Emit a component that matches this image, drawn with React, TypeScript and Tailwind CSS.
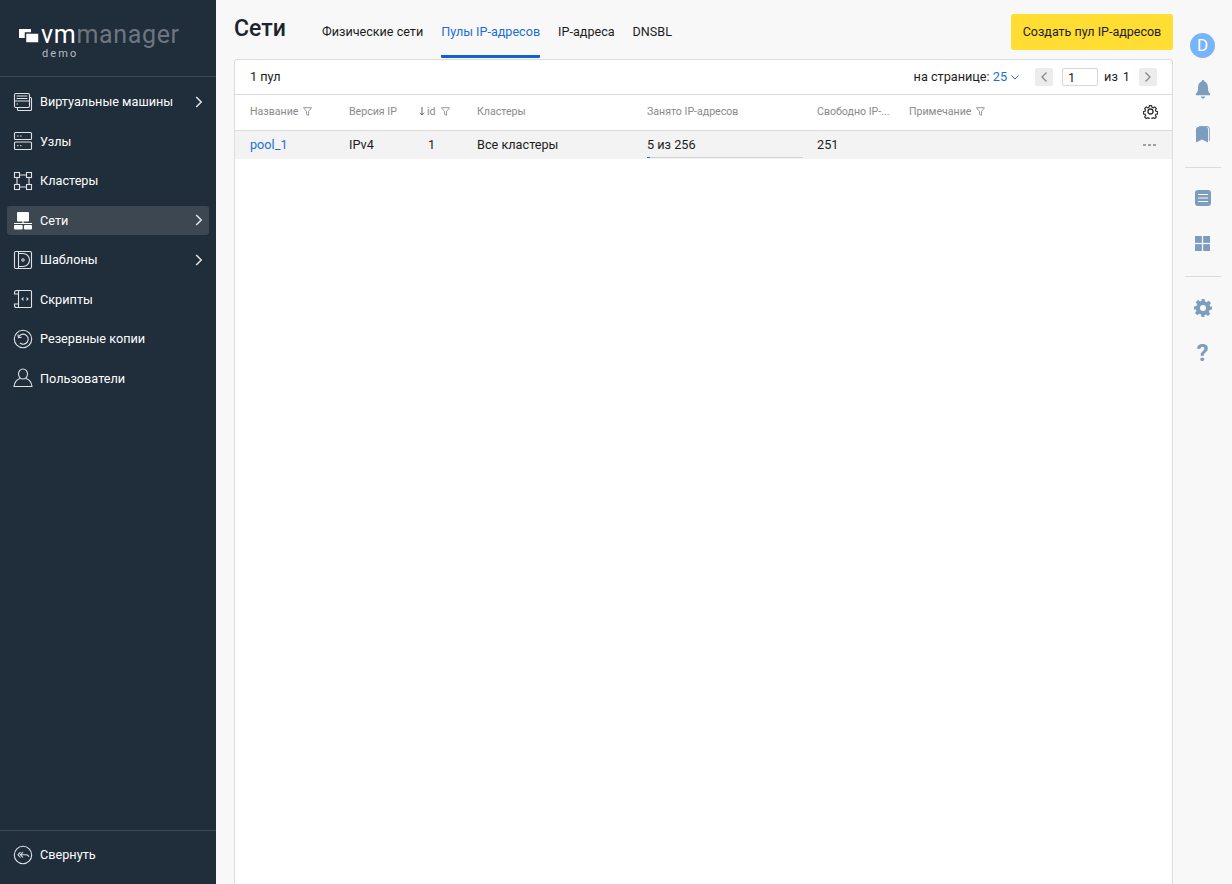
function Chevron({ className = "" }: { className?: string }) {
  return (
    <svg width="8" height="12" viewBox="0 0 8 12" fill="none" stroke="currentColor" strokeWidth="1.500" className={className}>
      <path d="M1.200 1l5 5-5 5" />
    </svg>
  );
}

const S = "#dfe2e5";
function IconVM() {
  return (
    <svg width="20" height="20" viewBox="0 0 20 20" fill="none" stroke={S} strokeWidth="1.100">
      <rect x="1.500" y="1.500" width="15" height="14" rx="1.500" />
      <path d="M3.500 4h11M3.500 6.500h11M1.500 9h15" />
      <path d="M3.500 12h1.500" />
      <path d="M16.500 5.500h1a1 1 0 0 1 1 1v11a1 1 0 0 1-1 1h-12a1 1 0 0 1-1-1v-2" />
    </svg>
  );
}
function IconNode() {
  return (
    <svg width="20" height="20" viewBox="0 0 20 20" fill="none" stroke={S} strokeWidth="1.100">
      <rect x="1.500" y="1.500" width="17" height="7" rx="1" />
      <rect x="1.500" y="11" width="17" height="7.500" rx="1" />
      <path d="M4 5h1.500M7 5h1.500M4 14.800h1.500M7 14.800h1.500" />
    </svg>
  );
}
function IconCluster() {
  return (
    <svg width="20" height="20" viewBox="0 0 20 20" fill="none" stroke={S} strokeWidth="1.100">
      <rect x="1.500" y="1.500" width="5" height="5" />
      <rect x="13.500" y="1.500" width="5" height="5" />
      <rect x="1.500" y="13.500" width="5" height="5" />
      <rect x="13.500" y="13.500" width="5" height="5" />
      <path d="M7 4h6M7 16h6M4 7v6M16 7v6" />
    </svg>
  );
}
function IconNet() {
  return (
    <svg width="20" height="20" viewBox="0 0 20 20" fill="#ffffff">
      <rect x="4" y="2" width="12" height="9.500" rx="1" />
      <rect x="9.400" y="11" width="1.200" height="3" />
      <rect x="1" y="13" width="18" height="1" />
      <rect x="1" y="15" width="8.700" height="4.500" rx="1" />
      <rect x="11" y="15" width="8" height="4.500" rx="1" />
    </svg>
  );
}
function IconTemplate() {
  return (
    <svg width="20" height="20" viewBox="0 0 20 20" fill="none" stroke={S} strokeWidth="1.100">
      <rect x="1.500" y="1.500" width="17" height="17" rx="1.500" />
      <path d="M5.500 1.500v17" />
      <path d="M5.500 3.500H10a6.500 6.500 0 0 1 0 13H5.500" />
      <circle cx="10" cy="10" r="1.200" />
    </svg>
  );
}
function IconScript() {
  return (
    <svg width="20" height="20" viewBox="0 0 20 20" fill="none" stroke={S} strokeWidth="1.100">
      <path d="M5.500 1.500h12a1 1 0 0 1 1 1v15a1 1 0 0 1-1 1h-12" />
      <path d="M5.500 1.500h-2a2 2 0 0 0-2 2v1.500h4zM5.500 18.500h-2a2 2 0 0 1-2-2V15h4zM5.500 5v10" />
      <path d="M10.500 8.700 9 10l1.500 1.300M13.500 8.700 15 10l-1.500 1.300" />
    </svg>
  );
}
function IconBackup() {
  return (
    <svg width="20" height="20" viewBox="0 0 20 20" fill="none" stroke={S} strokeWidth="1.100">
      <circle cx="10" cy="10" r="8.700" />
      <path d="M5.500 8.500A5 5 0 1 1 7 14" />
      <path d="M5 5.500l.5 3.200 3.200-.5" />
    </svg>
  );
}
function IconUser() {
  return (
    <svg width="20" height="20" viewBox="0 0 20 20" fill="none" stroke={S} strokeWidth="1.100">
      <ellipse cx="10" cy="6" rx="4.500" ry="5" />
      <path d="M7 10.500C4 11.500 1.500 14 1 18.500h18c-.5-4.500-3-7-6-8" />
    </svg>
  );
}
function IconCollapse() {
  return (
    <svg width="20" height="20" viewBox="0 0 20 20" fill="none" stroke={S} strokeWidth="1.100">
      <circle cx="10" cy="10" r="8.700" />
      <path d="M7.500 7 5 9.800 7.500 12.500M10 7 7.500 9.800 10 12.500" />
      <path d="M7 9.800h6c1.500 0 2.500.7 3 2" />
    </svg>
  );
}

function Funnel() {
  return (
    <svg width="9" height="9" viewBox="0 0 9 9" fill="none" stroke="#8f8f8f" strokeWidth="0.900" className="ml-[5px] mt-[1px]">
      <path d="M.5.7h8L5.500 4.500V8.300L3.500 7.300V4.500z" />
    </svg>
  );
}

const NAV: { label: string; icon: React.ReactNode; arrow?: boolean; active?: boolean }[] = [
  { label: "Виртуальные машины", icon: <IconVM />, arrow: true },
  { label: "Узлы", icon: <IconNode /> },
  { label: "Кластеры", icon: <IconCluster /> },
  { label: "Сети", icon: <IconNet />, arrow: true, active: true },
  { label: "Шаблоны", icon: <IconTemplate />, arrow: true },
  { label: "Скрипты", icon: <IconScript /> },
  { label: "Резервные копии", icon: <IconBackup /> },
  { label: "Пользователи", icon: <IconUser /> },
];

function Sidebar() {
  return (
    <aside className="w-[216px] shrink-0 bg-[#202d3b] h-full flex flex-col text-white">
      <div className="h-[77px] shrink-0 border-b border-[#3c4854] pl-[19px] pt-[25px]">
        <div className="flex items-center h-[20px]">
          <svg width="20" height="14" viewBox="0 0 20 14" fill="#ffffff" className="mr-[2px] mt-[1px]">
            <rect x="0" y="0" width="12" height="9" />
            <rect x="6.500" y="4" width="13.500" height="10" stroke="#202d3b" strokeWidth="1.500" />
          </svg>
          <span className="text-[25px] leading-[20px] tracking-[0.7px] text-white">vm</span>
          <span className="text-[25px] leading-[20px] tracking-[0.65px] text-[#6d767f]">manager</span>
        </div>
        <div className="text-[11px] leading-[12px] tracking-[2.1px] ml-[23px] mt-[3px] text-[#b8bcc1]">demo</div>
      </div>
      <nav className="flex flex-col gap-[10.5px] px-[7px] pt-[10.3px]">
        {NAV.map((n) => (
          <div
            key={n.label}
            className={`h-[29px] flex items-center pl-[6px] pr-[7px] rounded-[3px] ${n.active ? "bg-[#3c4752]" : ""}`}
          >
            <span className="w-[20px] h-[20px] shrink-0">{n.icon}</span>
            <span className="ml-[7px] text-[12.7px] flex-1 whitespace-nowrap">{n.label}</span>
            {n.arrow && <Chevron className="text-[#e4e6e8] mr-[-0.5px]" />}
          </div>
        ))}
      </nav>
      <div className="mt-auto h-[54px] border-t border-[#3c4854] flex items-center pl-[13px] pb-[6px]">
        <IconCollapse />
        <span className="ml-[7px] text-[12.7px]">Свернуть</span>
      </div>
    </aside>
  );
}

function RightRail() {
  const c = "#7c9dbd";
  return (
    <aside className="w-[59px] shrink-0 h-full flex flex-col items-center pt-[33px]">
      <div className="w-[25px] h-[25px] rounded-full bg-[#77b4fb] text-white flex items-center justify-center text-[17px] leading-none">D</div>
      <svg width="16" height="19" viewBox="0 0 18 20" preserveAspectRatio="none" fill={c} className="mt-[22px]">
        <path d="M9 0a1.500 1.500 0 0 1 1.500 1.700C13 2.400 14.500 4.500 14.500 7.500c0 4 1 5.500 2.500 7v1.500H1v-1.500c1.500-1.500 2.500-3 2.500-7 0-3 1.500-5.100 4-5.800A1.500 1.500 0 0 1 9 0z" />
        <path d="M6.500 17.300h5C11 18.800 10 19.500 9 19.500s-2-.7-2.500-2.200z" />
      </svg>
      <svg width="14" height="17" viewBox="0 0 14 17" fill={c} className="mt-[27px]">
        <path d="M0 3.500a2.500 2.500 0 0 1 2.500-2.500H10a2 2 0 0 1 2 2V16.500L6 13.500 0 16.500z" />
        <path d="M3 .5h8a2.400 2.400 0 0 1 2.400 2.400V15" fill="none" stroke={c} strokeWidth="0.900" />
      </svg>
      <div className="w-[36px] h-px bg-[#dcdcdc] mt-[24px]" />
      <svg width="16" height="16" viewBox="0 0 16 16" className="mt-[22px]">
        <rect width="16" height="16" rx="3" fill={c} />
        <path d="M3 4.500h10M3 8h10M3 11.500h10" stroke="#f8f8f8" strokeWidth="1.200" />
      </svg>
      <svg width="15" height="15" viewBox="0 0 16 16" fill={c} className="mt-[30px]">
        <rect width="7.300" height="7.300" />
        <rect x="8.700" width="7.300" height="7.300" />
        <rect y="8.700" width="7.300" height="7.300" />
        <rect x="8.700" y="8.700" width="7.300" height="7.300" />
      </svg>
      <div className="w-[36px] h-px bg-[#dcdcdc] mt-[25px]" />
      <svg width="18" height="18" viewBox="0 0 24 24" fill={c} className="mt-[22px]">
        <path fillRule="evenodd" d="M10 0h4l.6 3.300a9 9 0 0 1 2.300 1l2.800-1.900 2.900 2.900-1.900 2.800a9 9 0 0 1 1 2.300L24 10.000v4l-3.300.6a9 9 0 0 1-1 2.300l1.900 2.800-2.900 2.900-2.800-1.900a9 9 0 0 1-2.300 1L14 24h-4l-.6-3.300a9 9 0 0 1-2.300-1l-2.800 1.900-2.900-2.900 1.900-2.800a9 9 0 0 1-1-2.300L0 14v-4l3.300-.6a9 9 0 0 1 1-2.300L2.400 4.300l2.900-2.900 2.800 1.900a9 9 0 0 1 2.300-1zM12 8a4 4 0 1 0 0 8 4 4 0 0 0 0-8z" />
      </svg>
      <span className="mt-[22px] text-[24px] leading-[28px] font-bold text-[#7c9dbd]">?</span>
    </aside>
  );
}

function Gear() {
  return (
    <svg width="15" height="15" viewBox="0 0 24 24" fill="none" stroke="#2e2e2e" strokeWidth="2.100" className="block">
      <path d="M10 1.500h4l.6 3a8 8 0 0 1 2.400 1l2.600-1.700 2.800 2.800-1.700 2.600a8 8 0 0 1 1 2.400l3 .6v4l-3 .6a8 8 0 0 1-1 2.400l1.700 2.600-2.800 2.800-2.600-1.700a8 8 0 0 1-2.400 1l-.6 3h-4l-.6-3a8 8 0 0 1-2.400-1l-2.600 1.700-2.800-2.800 1.700-2.600a8 8 0 0 1-1-2.400l-3-.6v-4l3-.6a8 8 0 0 1 1-2.400L1.600 6.600l2.800-2.800L7 5.500a8 8 0 0 1 2.400-1z" transform="translate(1.200 1.200) scale(.9)" />
      <circle cx="12" cy="12" r="4" />
    </svg>
  );
}

function Th({ w, children }: { w: string; children: React.ReactNode }) {
  return <div className={`${w} shrink-0 flex items-center whitespace-nowrap`}>{children}</div>;
}

function Card() {
  return (
    <section className="flex-1 min-h-0 bg-white border border-b-0 border-[#dcdcdc] rounded-t-[4px] flex flex-col">
      <div className="h-[35px] shrink-0 flex items-center pl-[15px] pr-[15px] text-[12.7px] text-[#1c1c1c] border-b border-[#dcdcdc]">
        <span>1 пул</span>
        <span className="ml-auto">на странице: <span className="text-[#1a6fd6]">25</span></span>
        <svg width="8" height="5" viewBox="0 0 8 5" fill="none" stroke="#1a6fd6" className="ml-[4px] mt-[1px]"><path d="M.5.5 4 4 7.500.5" /></svg>
        <button className="ml-[16px] w-[18px] h-[18px] rounded-[2px] bg-[#ececec] flex items-center justify-center">
          <Chevron className="text-[#8c8c8c] rotate-180 scale-90" />
        </button>
        <div className="ml-[9px] w-[36px] h-[18px] border border-[#d6d6d6] rounded-[2px] pl-[5px] leading-[17px]">1</div>
        <span className="ml-[6px]">из</span>
        <span className="ml-[5px]">1</span>
        <button className="ml-[9px] w-[18px] h-[18px] rounded-[2px] bg-[#ececec] flex items-center justify-center">
          <Chevron className="text-[#8c8c8c] scale-90" />
        </button>
      </div>
      <div className="h-[36px] shrink-0 flex items-center pl-[15px] pr-[14px] pb-[2px] text-[10.6px] text-[#8a8a8a] border-b border-[#dcdcdc]">
        <Th w="w-[99px]">Название<Funnel /></Th>
        <Th w="w-[70px]">Версия IP</Th>
        <Th w="w-[58px]">
          <svg width="6" height="9" viewBox="0 0 6 9" fill="none" stroke="#555" strokeWidth="0.900" className="mr-[2px] mt-[1px]"><path d="M3 0v8M1 5.800 3 8l2-2.200" /></svg>
          id<Funnel />
        </Th>
        <Th w="w-[170px]">Кластеры</Th>
        <Th w="w-[170px]">Занято IP-адресов</Th>
        <Th w="w-[92px]">Свободно IP-...</Th>
        <Th w="w-[100px]">Примечание<Funnel /></Th>
        <span className="ml-auto"><Gear /></span>
      </div>
      <div className="h-[28px] shrink-0 flex items-center pl-[15px] pr-[16px] text-[12.7px] text-[#1c1c1c] bg-[#f3f3f3]">
        <div className="w-[99px] text-[#1a6fd6]">pool_1</div>
        <div className="w-[70px]">IPv4</div>
        <div className="w-[58px] pl-[9px]">1</div>
        <div className="w-[170px]">Все кластеры</div>
        <div className="w-[170px] h-full relative flex items-center">
          5 из 256
          <div className="absolute left-0 bottom-[1px] w-[156px] h-px bg-[#d2d2d2]">
            <div className="w-[3px] h-px bg-[#1a6fd6]" />
          </div>
        </div>
        <div className="w-[92px]">251</div>
        <div className="ml-auto flex gap-[2px]">
          <i className="w-[3px] h-[2px] bg-[#a0a0a0] block" /><i className="w-[3px] h-[2px] bg-[#a0a0a0] block" /><i className="w-[3px] h-[2px] bg-[#a0a0a0] block" />
        </div>
      </div>
    </section>
  );
}

export default function App() {
  return (
    <div className="w-[1232px] h-[884px] overflow-hidden flex bg-[#f8f8f8] font-['Roboto',sans-serif] text-[#1c1c1c]">
      <Sidebar />
      <main className="flex-1 min-w-0 h-full flex flex-col pl-[18px]">
        <header className="h-[59px] shrink-0 flex items-start">
          <h1 className="w-[52px] text-[23px] leading-[28px] font-medium mt-[15px] text-[#1b2530]">Сети</h1>
          <nav className="flex ml-[36px] gap-[18px] text-[12.6px] h-full">
            <a className="pt-[23px]">Физические сети</a>
            <a className="pt-[23px] text-[#1a6fd6] border-b-[3px] border-[#0f62d0] h-[58px] rounded-b-[1px]">Пулы IP-адресов</a>
            <a className="pt-[23px]">IP-адреса</a>
            <a className="pt-[23px]">DNSBL</a>
          </nav>
          <button className="ml-auto mt-[14px] w-[162px] h-[36px] rounded-[3px] bg-[#ffdd33] text-[12.5px] text-[#1c1c1c]">Создать пул IP-адресов</button>
        </header>
        <Card />
      </main>
      <RightRail />
    </div>
  );
}
